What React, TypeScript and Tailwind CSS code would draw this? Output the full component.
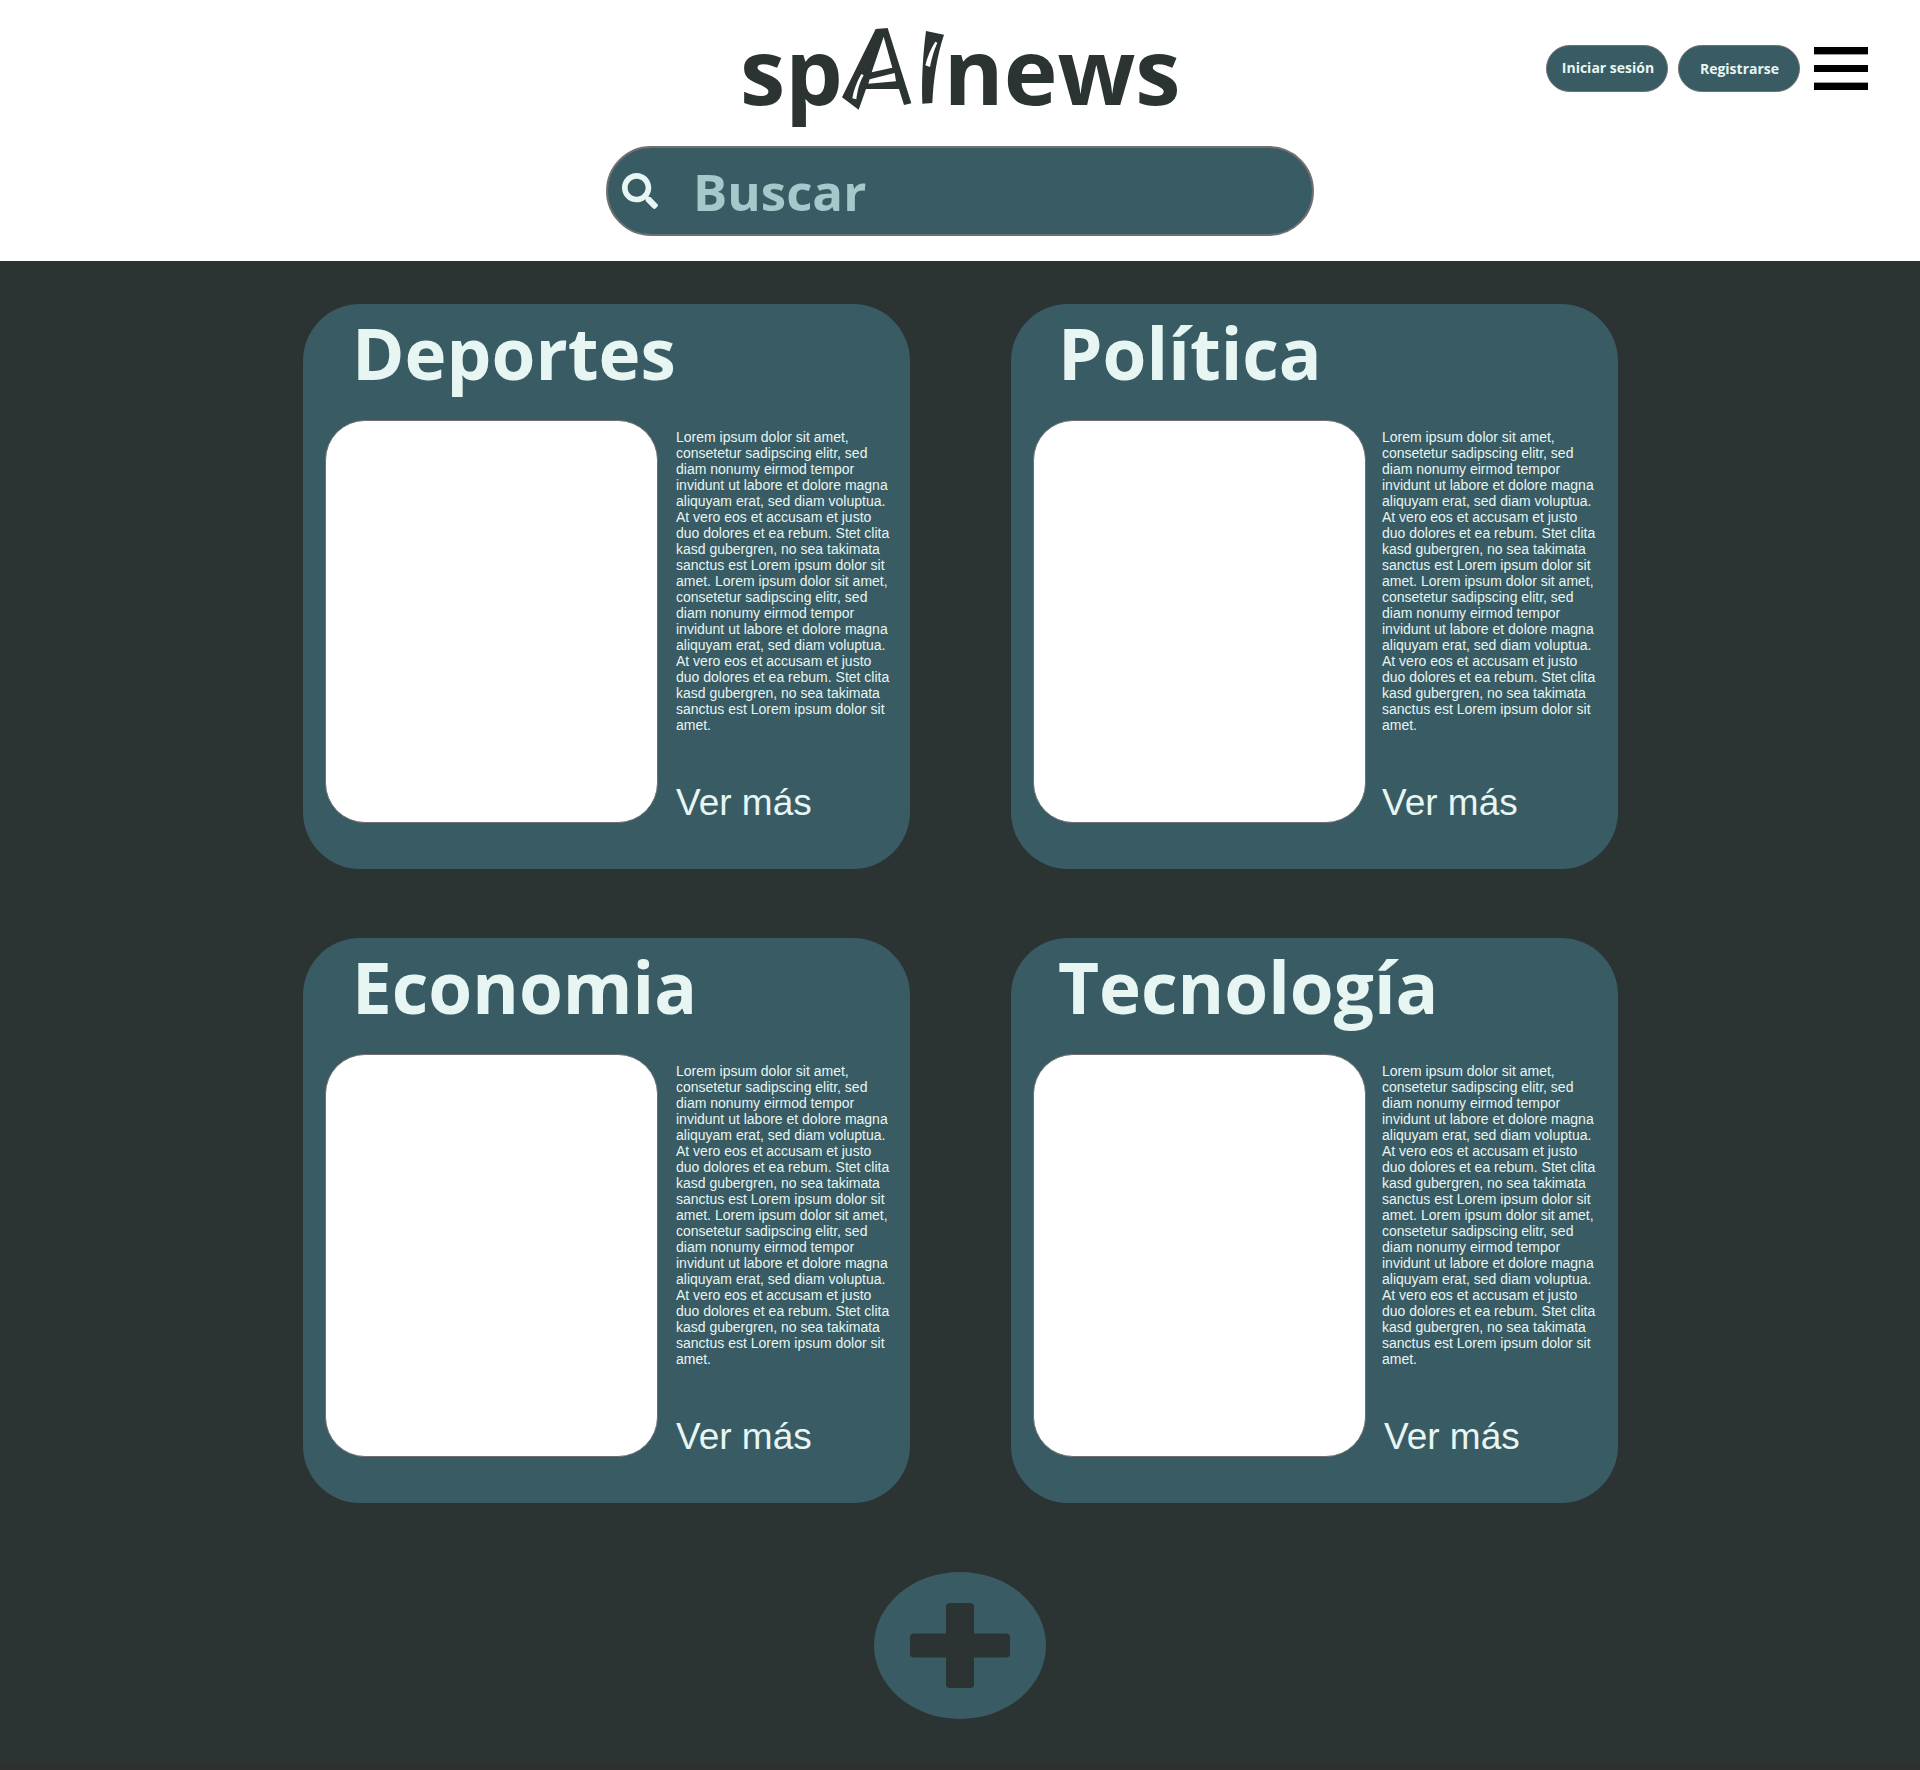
import { FaSearch } from "react-icons/fa";

const LOREM =
  "Lorem ipsum dolor sit amet, consetetur sadipscing elitr, sed diam nonumy eirmod tempor invidunt ut labore et dolore magna aliquyam erat, sed diam voluptua. At vero eos et accusam et justo duo dolores et ea rebum. Stet clita kasd gubergren, no sea takimata sanctus est Lorem ipsum dolor sit amet.";
const SUMMARY = `${LOREM} ${LOREM}`;

function Logo() {
  return (
    <h1 className="flex h-[146px] w-[440px] items-start text-[91px] leading-[140px] font-bold text-[#2c3333]">
      <span>sp</span>
      <svg viewBox="18 0 324 300" className="-ml-[2px] mt-5 h-[100px] w-[108px] shrink-0" fill="currentColor" fillRule="evenodd">
        <path d="M122 27 158 24 229 250 207 255 192 207 93 207 71 269 21 232ZM146 50 110 157 172 143ZM104 178 179 159 183 184 100 191ZM79 162 86 166C72 190 67 215 64 238L52 235C56 210 66 185 79 162Z" />
        <path d="M273 33 327 44C305 110 295 180 292 249L262 251C259 180 264 100 273 33ZM301 65 307 68C295 95 289 120 285 141L271 136C277 110 288 85 301 65Z" />
      </svg>
      <span className="-ml-[5px]">news</span>
    </h1>
  );
}

function MenuIcon() {
  return (
    <button className="ml-[14px] mt-[2px] flex h-[43px] w-[54px] flex-col justify-between">
      <span className="h-[8px] w-full border-b border-[#a0a0a0] bg-black" />
      <span className="h-[7px] w-full bg-black" />
      <span className="h-[8px] w-full border-t border-[#a0a0a0] bg-black" />
    </button>
  );
}

function Card({ title, right, last }: { title: string; right?: boolean; last?: boolean }) {
  return (
    <article className="h-[565px] w-[607px] rounded-[57px] bg-[#395b64]">
      <h2 className={`h-[116px] text-[71px] leading-[98px] font-bold ${right ? "pl-[47px]" : "pl-[49px]"}`}>{title}</h2>
      <div className="flex pl-[22px]">
        <div className="h-[403px] w-[333px] shrink-0 rounded-[40px] border border-[#707070] bg-white" />
        <div className={`pt-[9px] font-['Liberation_Sans',Arial,sans-serif] ${right ? "ml-[16px]" : "ml-[18px]"}`}>
          <p className="w-[217px] text-[14px] leading-4">{SUMMARY}</p>
          <a className={`mt-[48px] block text-[37px] leading-[44px] ${last ? "pl-[2px]" : ""}`}>Ver más</a>
        </div>
      </div>
    </article>
  );
}

export default function App() {
  return (
    <div className="h-[1770px] w-[1920px] overflow-hidden bg-[#2c3333] font-['Open_Sans',sans-serif] text-[#e7f6f2]">
      <header className="h-[261px] bg-white">
        <div className="grid h-[146px] grid-cols-[740px_440px_1fr]">
          <span />
          <Logo />
          <nav className="flex items-start justify-end pr-[52px] pt-[45px]">
            <button className="mr-[10px] h-[47px] w-[122px] rounded-full border border-[#707070] bg-[#395b64] pb-[2px] pl-[2px] text-[14px] font-bold whitespace-nowrap">
              Iniciar sesión
            </button>
            <button className="h-[47px] w-[122px] rounded-full border border-[#707070] bg-[#395b64] pl-[1px] text-[14px] font-bold whitespace-nowrap">
              Registrarse
            </button>
            <MenuIcon />
          </nav>
        </div>
        <div className="mx-auto flex h-[90px] w-[708px] items-center rounded-full border-2 border-[#707070] bg-[#395b64] pl-[14px]">
          <FaSearch className="size-[36px]" />
          <span className="ml-[35px] text-[51px] leading-[68px] font-bold text-[#a5c9ca]">Buscar</span>
        </div>
      </header>
      <main>
        <section className="grid grid-cols-[607px_607px] gap-x-[101px] gap-y-[69px] pl-[303px] pt-[43px]">
          <Card title="Deportes" />
          <Card title="Política" right />
          <Card title="Economia" />
          <Card title="Tecnología" right last />
        </section>
        <button className="mx-auto mt-[69px] flex h-[147px] w-[172px] items-center justify-center rounded-[50%] bg-[#395b64]">
          <svg viewBox="0 0 100 85" className="h-[85px] w-[100px] text-[#2c3333]" fill="currentColor">
            <rect x="36" width="28" height="85" rx="4" />
            <rect y="30.5" width="100" height="24" rx="4" />
          </svg>
        </button>
      </main>
      <div className="mt-[46px] h-[5px] bg-[#2f2f2f]" />
    </div>
  );
}
